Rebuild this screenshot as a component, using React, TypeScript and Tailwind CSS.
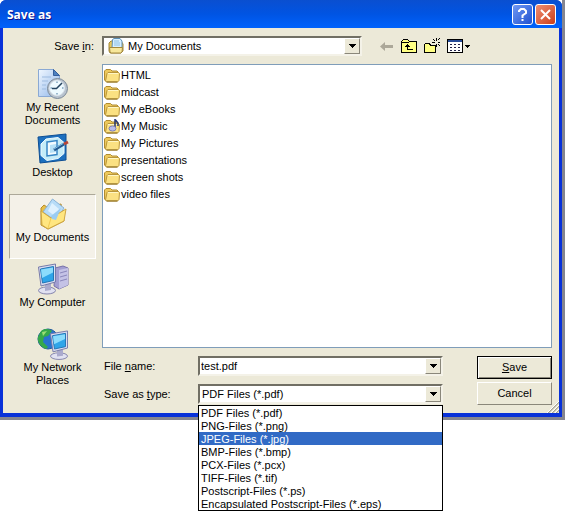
import { useState } from "react";
import type { ReactNode } from "react";

const folders = [
  "HTML",
  "midcast",
  "My eBooks",
  "My Music",
  "My Pictures",
  "presentations",
  "screen shots",
  "video files",
];

const fileTypes = [
  "PDF Files (*.pdf)",
  "PNG-Files (*.png)",
  "JPEG-Files (*.jpg)",
  "BMP-Files (*.bmp)",
  "PCX-Files (*.pcx)",
  "TIFF-Files (*.tif)",
  "Postscript-Files (*.ps)",
  "Encapsulated Postscript-Files (*.eps)",
];

const raised =
  "border border-t-white border-l-white border-r-[#8a877a] border-b-[#8a877a] bg-[#ece9d8]";
const sunken =
  "border-2 border-t-[#716f64] border-l-[#716f64] border-r-[#f4f2e8] border-b-[#f4f2e8] bg-white";

function FolderIcon({ music = false }: { music?: boolean }) {
  return (
    <svg viewBox="0 0 16 16" className="h-4 w-4 shrink-0">
      <path d="M.5 3 2 1.500h4.500L8 3h5l1.500 1.500V12L13 13.500H2L.5 12z" fill="#edc95c" stroke="#b18c30" />
      <path d="M3 5.500 4 4.500h10.500l1 1-.5 7-1.500 1.500h-11L1.500 13z" fill="#fbe182" stroke="#b9963c" />
      <path d="M4 5.500h10" stroke="#fff6c4" />
      <path d="M2.500 14h11" stroke="#8a6c20" />
      {music && (
        <>
          <path d="M11 0v8M11.500 1l2.500 3v3" fill="none" stroke="#24356f" strokeWidth="1.500" />
          <ellipse cx="8.500" cy="9.500" rx="3.500" ry="2.600" fill="#b9bbe8" stroke="#7b7fb8" />
        </>
      )}
    </svg>
  );
}

function DocumentsSmallIcon() {
  return (
    <svg viewBox="0 0 16 16" className="h-4 w-4">
      <path d="M1 5 3 3h10l2 3v7l-2 2H2l-1-2z" fill="#e9c85a" stroke="#a3883c" />
      <path d="M4.500 1.500 6 .5h6L14 3v7H4z" fill="#d7efff" stroke="#5c8fb5" />
      <path d="M6 3h5M6 5h6M6 7h6" stroke="#8ec0e2" />
      <path d="M1.500 9.500h13L14 14l-1 1H3l-1-1z" fill="#f7e79a" stroke="#a3883c" />
    </svg>
  );
}

function RecentIcon() {
  return (
    <svg viewBox="0 0 32 32" className="h-8 w-8">
      <defs>
        <linearGradient id="paper" x2="1" y2="1">
          <stop stopColor="#f0f7ff" />
          <stop offset="1" stopColor="#8fb6ea" />
        </linearGradient>
      </defs>
      <path d="M1.500 1.500h15l6 6v21h-21z" fill="url(#paper)" stroke="#8aa9d4" />
      <path d="M16.500 1.500v6h6z" fill="#4c80bf" stroke="#355f9d" />
      <path d="M5 9h9M5 13h6M5 17h4M5 21h4" stroke="#9dbbe0" />
      <circle cx="20.500" cy="20.500" r="10" fill="#b8c3cf" stroke="#7b8998" />
      <circle cx="20" cy="20" r="7.500" fill="#eefaff" stroke="#dfe7ee" />
      <path d="m25 15-5.500 5.500H15" fill="none" stroke="#24435f" strokeWidth="1.500" />
      <path d="M20 13.500v1.500M20 25v1.500M13.500 20H15M25 20h1.500" stroke="#47769d" />
    </svg>
  );
}

function DesktopIcon() {
  return (
    <svg viewBox="0 0 32 32" className="h-8 w-8">
      <path d="m1 4 28-3v26L3 30z" fill="#1d70bf" stroke="#0d4e94" />
      <path d="m9 6 12-1.500 6 5v11l-6 5-11 2-6-5V11z" fill="#c5ecf8" stroke="#eefaff" />
      <path d="m10 9 10-1.500v14L10 23z" fill="#f2fbff" stroke="#3886c5" strokeWidth="1.500" />
      <path d="m13 12 6-1v8l-6 1z" fill="#b6e1f7" />
      <path d="m17 17 10-6" stroke="#24588d" strokeWidth="3" />
      <path d="m17 16 9-5.500" stroke="#83c5ed" />
      <path d="m27 11 4-2" stroke="#b74535" strokeWidth="3" />
    </svg>
  );
}

function DocumentsIcon() {
  return (
    <svg viewBox="0 0 32 32" className="h-8 w-8">
      <path d="m4 10 3-3 3 2 14-3 3 17-16 8-7-4z" fill="#e6bf4b" stroke="#b88c27" />
      <path d="M15.500 1 27 10l-8 13-13-9z" fill="#b7dcf8" stroke="#8bb3d6" />
      <path d="m15 5 7 6-4 7-7-5z" fill="#dff1fe" />
      <path d="m4 13 10 7 15-9-2 12-16 8-6-4z" fill="#ffe680" stroke="#cfa743" />
      <path d="m14 20-3 10" stroke="#f2ca55" />
      <path d="m14 18 10-8-5 12-4-1z" fill="#9accf2" />
    </svg>
  );
}

function Monitor() {
  return (
    <>
      <ellipse cx="10" cy="27.500" rx="8.500" ry="3.500" fill="#e0e1f1" stroke="#8585ad" />
      <path d="m8 20 6 1v6l-6 1z" fill="#aaaacd" />
      <path d="m1.500 4 17-3v18L4 23z" fill="#d9dcf1" stroke="#777ba9" />
      <path d="m3.500 6 13-2.500v14L5.500 20z" fill="#2fa5e9" stroke="#2376b5" />
      <path d="m4 6.500 12-2v5L5 15z" fill="#8bdcfc" />
    </>
  );
}

function ComputerIcon() {
  return (
    <svg viewBox="0 0 32 32" className="h-8 w-8">
      <path d="m18 5 8-2 5 2v17l-9 4-5-3z" fill="#a29ed1" stroke="#7771a9" />
      <path d="m22 7 9-2v17l-9 4z" fill="#c4c2e6" />
      <path d="m23 10 7-2M23 14l7-2M23 18l7-2" stroke="#8a86bb" />
      <Monitor />
    </svg>
  );
}

function NetworkIcon() {
  return (
    <svg viewBox="0 0 32 32" className="h-8 w-8">
      <circle cx="11" cy="11" r="10" fill="#2773ce" stroke="#245a9d" />
      <path d="M4 3c4-3 9-2 11 0l-4 5-4 1-1 5 5 5-2 2C3 19 0 13 1 9z" fill="#35a84b" />
      <path d="m5 4 5-1-4 5z" fill="#9bdf72" />
      <g transform="translate(12 2) scale(1 .95)">
        <Monitor />
      </g>
    </svg>
  );
}

function Arrow() {
  return (
    <svg viewBox="0 0 7 4" className="h-1 w-[7px]" shapeRendering="crispEdges">
      <path d="M0 0h7L3.500 4z" />
    </svg>
  );
}

function ComboBox({ children }: { children: ReactNode }) {
  return (
    <div className={`relative h-5 ${sunken}`}>
      {children}
      <span
        className={`pointer-events-none absolute inset-y-0 right-0 flex w-4 items-center justify-center ${raised}`}
      >
        <Arrow />
      </span>
    </div>
  );
}

const places = [
  { label: "My Recent Documents", icon: <RecentIcon />, height: "h-[65px]" },
  { label: "Desktop", icon: <DesktopIcon />, height: "h-[65px]" },
  { label: "My Documents", icon: <DocumentsIcon />, height: "h-[65px]" },
  { label: "My Computer", icon: <ComputerIcon />, height: "h-[65px]" },
  { label: "My Network Places", icon: <NetworkIcon />, height: "h-[65px]" },
];

export default function App() {
  const [place, setPlace] = useState("My Documents");
  const [fileName, setFileName] = useState("test.pdf");
  const [type, setType] = useState(fileTypes[0]);
  const [active, setActive] = useState(fileTypes[2]);
  const [open, setOpen] = useState(true);

  return (
    <div className="min-h-screen bg-white font-['Liberation_Sans',sans-serif] text-[11px] leading-[13px] text-black">
      <div className="border-r-[3px] border-b-[3px] border-[#85858f]">
        <div className="rounded-t-md bg-[#0831d9]">
          <header className="flex h-7 items-center justify-between rounded-t-md bg-linear-to-b from-[#0a4fd0] via-[#0054e3] to-[#0062fc] pt-px pr-[6px] pl-[7px]">
            <h1 className="font-['Open_Sans',sans-serif] text-[12px] font-bold text-white [text-shadow:1px_1px_#0f1089]">
              Save as
            </h1>
            <div className="flex gap-[2px]">
              <button
                aria-label="Help"
                className="flex h-[21px] w-[21px] items-center justify-center rounded-[3px] border border-white bg-linear-to-br from-[#6f98f4] to-[#2150cf]"
              >
                <svg viewBox="0 0 13 15" className="h-[15px] w-[13px]" fill="none" stroke="white" strokeWidth="2">
                  <path d="M3 5V4l2-2h3l2 2v2L6.500 8.500V11M6.500 12v2" />
                </svg>
              </button>
              <button
                aria-label="Close"
                className="flex h-[21px] w-[21px] items-center justify-center rounded-[3px] border border-white bg-linear-to-br from-[#ee8d70] to-[#cc3c12]"
              >
                <svg viewBox="0 0 13 13" className="h-[13px] w-[13px]" stroke="white" strokeWidth="2">
                  <path d="m2 2 9 9M11 2l-9 9" />
                </svg>
              </button>
            </div>
          </header>

          <main className="relative mx-[3px] bg-[#ece9d8] pt-2 pr-[7px] pl-[6px]">
            <div className="flex items-center">
              <label htmlFor="folder" className="w-[93px] shrink-0 pr-2 text-right">
                Save <u>i</u>n:
              </label>
              <div className="max-w-[260px] flex-1">
                <ComboBox>
                  <span className="pointer-events-none absolute left-1">
                    <DocumentsSmallIcon />
                  </span>
                  <select id="folder" className="block h-4 w-full appearance-none pl-6 leading-4">
                    <option>My Documents</option>
                  </select>
                </ComboBox>
              </div>
              <div className="ml-4 flex items-center gap-[7px]">
                <button aria-label="Back">
                  <svg viewBox="0 0 16 16" className="h-4 w-4">
                    <path d="M2 8.500 7 4v3h8v3H7v3z" fill="#aca899" />
                  </svg>
                </button>
                <button aria-label="Up one level">
                  <svg viewBox="0 0 16 16" className="h-4 w-4" shapeRendering="crispEdges">
                    <path d="M.5 14.500v-11l2-2h4l2 2h7v11z" fill="#ffff84" stroke="black" />
                    <path d="M1 4.500h7" stroke="black" />
                    <path d="M4 8.500h5M5 7.500h3M6.500 6v5.500h5" fill="none" stroke="black" />
                  </svg>
                </button>
                <button aria-label="New folder">
                  <svg viewBox="0 0 16 16" className="h-4 w-4" shapeRendering="crispEdges">
                    <path d="M.5 14.500v-8l1-1h4l1 2h5v7z" fill="#ffff84" stroke="black" />
                    <path d="M12.500 0v3M12.500 6v3M8 4.500h3M14 4.500h2M9 1l2 2M14 2l2-2M14 6l2 2" stroke="black" />
                  </svg>
                </button>
                <button aria-label="View menu" className="flex items-center gap-[2px]">
                  <svg viewBox="0 0 16 14" className="h-[14px] w-4" shapeRendering="crispEdges">
                    <path d="M.5.5h15v13H.5z" fill="white" stroke="black" />
                    <path d="M1 2h14" stroke="#254a98" strokeWidth="2" />
                    <path d="M3 5.500h10M3 8.500h10M3 11.500h10" stroke="#22224a" strokeDasharray="2 2" />
                  </svg>
                  <svg viewBox="0 0 5 3" className="h-[3px] w-[5px]" shapeRendering="crispEdges">
                    <path d="M0 0h5L2.500 3z" />
                  </svg>
                </button>
              </div>
            </div>

            <div className="mt-2 flex">
              <nav className="w-[87px] shrink-0">
                {places.map((p) => (
                  <button
                    key={p.label}
                    onClick={() => setPlace(p.label)}
                    className={`flex w-full flex-col items-center gap-px border pt-[3px] text-center ${p.height} ${
                      place === p.label
                        ? "border-t-[#aca899] border-l-[#aca899] border-r-white border-b-white bg-[#f4f1e8]"
                        : "border-transparent"
                    }`}
                  >
                    {p.icon}
                    <span className="px-1">{p.label}</span>
                  </button>
                ))}
              </nav>

              <div className="ml-[6px] min-w-0 flex-1">
                <ul className="h-[284px] border border-[#7f9db9] bg-white pt-[2px] pl-[1px]">
                  {folders.map((f) => (
                    <li key={f} className="flex h-[17px] items-center gap-[1px]">
                      <FolderIcon music={f === "My Music"} />
                      {f}
                    </li>
                  ))}
                </ul>

                <div className="flex pt-2 pb-2">
                  <div className="flex flex-1 flex-col gap-2">
                    <div className="flex items-center">
                      <label htmlFor="name" className="w-24 shrink-0 pl-[2px]">
                        File <u>n</u>ame:
                      </label>
                      <div className="flex-1">
                        <ComboBox>
                          <input
                            id="name"
                            value={fileName}
                            onChange={(e) => setFileName(e.target.value)}
                            className="block h-4 w-full pl-[1px] outline-none"
                          />
                        </ComboBox>
                      </div>
                    </div>
                    <div className="flex items-center">
                      <label htmlFor="type" className="w-24 shrink-0 pl-[2px]">
                        Save as <u>t</u>ype:
                      </label>
                      <div className="relative flex-1">
                        <ComboBox>
                          <button
                            id="type"
                            role="combobox"
                            aria-expanded={open}
                            aria-controls="types"
                            onClick={() => setOpen(!open)}
                            className="block h-4 w-full pl-[2px] text-left"
                          >
                            {type}
                          </button>
                        </ComboBox>
                        {open && (
                          <ul
                            id="types"
                            role="listbox"
                            className="absolute top-[21px] left-0 z-10 w-full border border-black bg-white"
                          >
                            {fileTypes.map((t) => (
                              <li
                                key={t}
                                role="option"
                                aria-selected={t === active}
                                onMouseEnter={() => setActive(t)}
                                onClick={() => {
                                  setType(t);
                                  setOpen(false);
                                }}
                                className={`h-[13px] pl-[2px] leading-[14px] ${t === active ? "bg-[#316ac5] text-white" : ""}`}
                              >
                                {t}
                              </li>
                            ))}
                          </ul>
                        )}
                      </div>
                    </div>
                  </div>
                  <div className="ml-[34px] flex w-[75px] flex-col gap-[3px]">
                    <button className="h-[23px] border border-black bg-[#ece9d8] shadow-[inset_1px_1px_#fff,inset_-1px_-1px_#8a877a]">
                      <u>S</u>ave
                    </button>
                    <button className={`h-[23px] ${raised}`}>Cancel</button>
                  </div>
                </div>
              </div>
            </div>
            {/* resize grip */}
            <svg viewBox="0 0 12 12" className="absolute right-0 bottom-0 h-3 w-3">
              <path d="M1 12 12 1M5 12l7-7M9 12l3-3" stroke="#a8a594" strokeWidth="1.500" />
              <path d="M0 12 12 0M4 12l8-8M8 12l4-4" stroke="white" />
            </svg>
          </main>
          <div className="h-1" />
        </div>
      </div>
    </div>
  );
}
